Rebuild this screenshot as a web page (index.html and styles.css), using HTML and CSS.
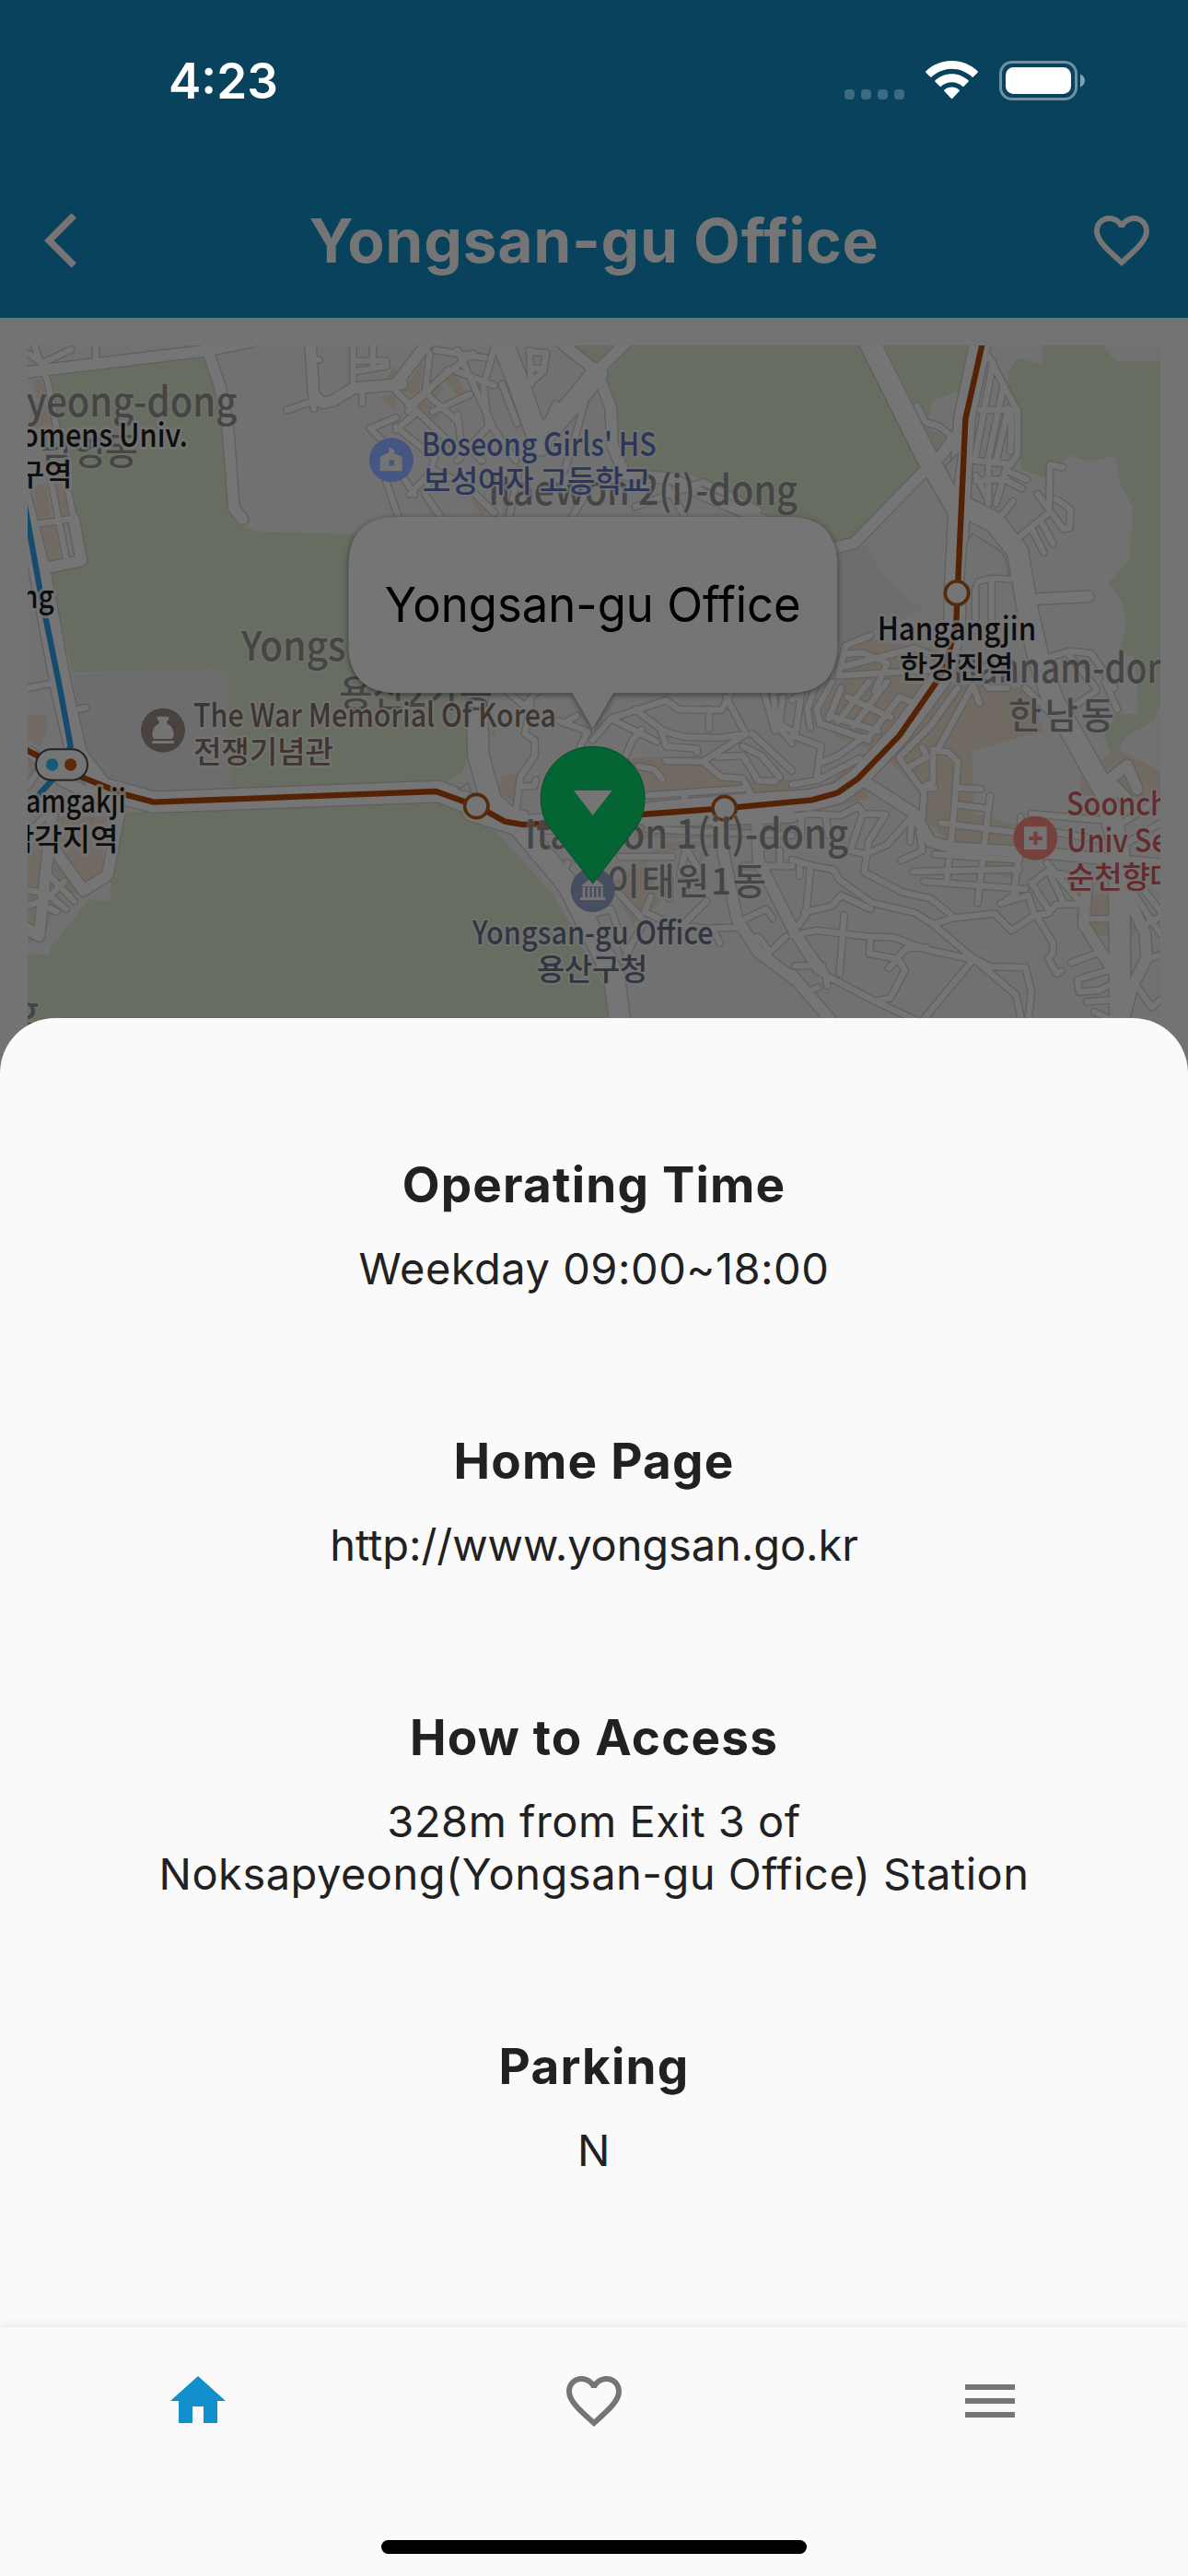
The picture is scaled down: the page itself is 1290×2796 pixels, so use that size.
FILE: index.html
```html
<!DOCTYPE html>
<html lang="en">
<head>
<meta charset="utf-8">
<title>Yongsan-gu Office</title>
<meta name="viewport" content="width=device-width">
<link rel="stylesheet" href="styles.css">
</head>
<body>
<div class="screen">
  <header class="top">
    <div class="status">
      <span class="clock">4:23</span>
      <span class="status-icons">
        <span class="signal"><i></i><i></i><i></i><i></i></span>
        <svg class="wifi" viewBox="0 0 57 42"><path d="M28.500 0C39.500 0 49.500 4.300 56.600 11.300Q57.300 12 56.600 12.700L51.800 17.600Q51.200 18.200 50.500 17.600C44.700 12.200 37 8.800 28.500 8.800S12.300 12.200 6.500 17.600Q5.800 18.200 5.200 17.600L.4 12.700Q-.3 12 .4 11.300C7.500 4.300 17.500 0 28.500 0z"/><path d="M28.500 14.200c7 0 13.300 2.700 18 7.100q.7.700 0 1.400l-5 5q-.7.700-1.400 0c-3.100-2.800-7.200-4.500-11.600-4.500s-8.500 1.700-11.600 4.500q-.7.700-1.400 0l-5-5q-.7-.7 0-1.400c4.700-4.400 11-7.100 18-7.100z"/><path d="M28.500 28.500c3.100 0 5.900 1.100 8.100 3q.7.700 0 1.400l-7.300 7.900q-.8.800-1.600 0l-7.300-7.900q-.7-.7 0-1.400c2.200-1.900 5-3 8.100-3z"/></svg>
        <svg class="battery" viewBox="0 0 94 43"><rect x="1.500" y="1.500" width="82" height="40" rx="12.500" fill="none" stroke="#fff" stroke-opacity=".42" stroke-width="3"/><rect x="7" y="7" width="71" height="29" rx="8.500"/><path d="M88 14.500c3 1.200 5 3.900 5 7s-2 5.800-5 7z" opacity=".5"/></svg>
      </span>
    </div>
    <div class="bar">
      <svg class="back" viewBox="0 0 12 24"><path d="M11.670 3.870L9.900 2.100 0 12l9.900 9.900 1.770-1.770L3.540 12z"/></svg>
      <h1>Yongsan-gu Office</h1>
      <svg class="icon" viewBox="0 0 24 24"><path id="heart" d="M16.500 3c-1.740 0-3.410.81-4.500 2.090C10.910 3.810 9.240 3 7.500 3 4.420 3 2 5.420 2 8.500c0 3.780 3.400 6.860 8.550 11.540L12 21.350l1.450-1.320C18.600 15.360 22 12.280 22 8.500 22 5.420 19.580 3 16.500 3zm-4.400 15.550l-.1.100-.1-.1C7.140 14.240 4 11.390 4 8.500 4 6.500 5.500 5 7.500 5c1.540 0 3.040.99 3.570 2.360h1.870C13.460 5.990 14.960 5 16.500 5c2 0 3.500 1.500 3.500 3.500 0 2.890-3.140 5.740-7.900 10.050z"/></svg>
    </div>
  </header>

  <main>
    <svg class="map" viewBox="90 75 3690 2370">
      <defs>
        <g id="streets">
          <path d="M90 100L140 132L232 88M110 70L135 140L155 190L210 480L265 775M165 510L215 765M130 655L240 638M312 75V115M935 286L1022 255M1022 240V282M1180 235V262M1028 121H1040M1150 80V195M1150 125H1258M1155 160L1260 142M1215 75V150M1290 310L1205 345L1260 400M1255 510L1300 640"/>
          <path transform="translate(1290)" d="M40 270L250 100M0 225L180 395M110 100L95 230L205 325M60 300L0 350M40 290L170 155M130 90L290 115M200 90L260 220L320 350L390 450M320 85L285 205L300 330M200 160L320 205M345 200L395 330M120 290L240 235M0 340L125 440L95 560L150 640M200 300L210 380L280 450M300 340L200 450M435 90L440 200M440 95L490 100L480 160L445 190M445 150H480M520 265L490 330M620 240L590 350L550 480M45 560L120 480L230 530L320 620M0 470L60 560M400 480L370 630M640 520L570 640M780 600L1000 520L1180 610M880 530L940 630"/>
          <path transform="translate(2580)" d="M408 272L435 325L480 338L525 375M640 110L735 290V430L695 480L665 590M655 130L595 450M690 200L640 440V590M705 280L665 450M715 300L712 420M612 285H735M600 450L715 462M600 515L700 510M600 500L640 580M705 485L765 512M695 512L748 540M720 582L688 622M882 472L840 463L838 610L885 673L905 668L907 608L860 575M838 618L745 695M800 558L838 610M815 655L850 720M785 680L820 748M597 1000V845L650 832L710 835M650 832V1000M840 1090L905 1070L975 1078L1050 1190M900 1080L990 1190M150 1150L175 1052L255 1020M170 1080L230 1075L310 1110M170 1120L400 1060L470 1090M310 1110L270 1200M160 1150L480 1130"/>
          <path transform="translate(0 1110)" d="M85 82L165 66M255 150L280 144M90 400L125 350M80 560L180 470M85 738L150 748L215 800M160 690L242 775M175 745L210 710M145 790L185 808M150 770L85 790"/>
          <path transform="translate(1290 1110)" d="M360 90L420 140L450 100L480 80M440 130L420 230L452 250V300L405 370L390 490M415 400H450L455 380M530 187L625 222L600 270M555 190L590 170M640 250L700 180L880 120L920 150L1060 152L1090 100M700 180L850 255M780 150L870 220L940 240L1060 242L1140 230M800 215L770 250L745 310M865 225L880 270L980 278V290M880 318L1000 320L1140 230L1075 110M1000 320L1060 370L1130 375L1165 445M1050 305L1130 300L1180 382L1235 384M1130 270L1190 300L1250 370M1160 230L1290 350M1230 100L1240 200L1290 260M1020 150V212M790 335L840 345L868 378M820 430L1130 408M940 420V480M1200 100L1235 220M1260 110L1250 200L1290 220M360 480L420 490M730 630H900M820 540L1290 560M945 600L925 690M945 600L990 680M1250 610V655M1130 660H1290M1110 845L1205 800L1228 830M1110 860L1030 862L1055 910M930 855L1012 775M830 760L810 810L900 850L1025 865M700 720L810 840L770 910L740 970M610 825L700 800L745 930M540 680L560 650M890 700V765M1150 900L1180 890L1218 940L1270 890"/>
          <path transform="translate(2580 1110)" d="M60 210L50 150L75 80M90 195L250 250M120 180L160 80M90 195L80 150L130 60M150 190L250 60M200 205L310 60M180 110L320 175M120 170L280 220M0 235L95 270L80 370M0 120L30 100L10 240M90 325L150 300L235 240M0 395L85 380L220 310M250 240L350 110L400 130M350 305L450 205L540 80M350 310L430 420L425 500M385 335L440 305L425 275M460 280V385L430 400M465 405H430M475 280L590 70L610 130M475 285L510 290L540 320L530 460L505 700M540 405L615 409M540 460L630 472M645 432L605 780M485 520L740 552M465 622L740 640M395 678L740 670M430 710L760 735M738 630L722 750M0 500L60 490L160 495L215 465L235 490L305 492L250 580L235 680L360 745L450 765L520 820M230 490L190 610L240 622L310 590L390 500L385 580M355 642L425 610L415 550M30 500V560M110 500L120 560M0 640L70 660L135 672L155 705L260 780L400 812L460 850L590 960L730 1080L755 1200M25 650V692M60 670L45 820L0 880M40 810L130 790L160 755L255 800M0 885L80 870L250 890L330 892L440 932L590 965L420 1170M460 850L520 830L660 815L715 870L790 820L770 755L680 782M170 820L155 1010M255 895L252 945L340 962L372 928L440 925M345 965L315 992M345 960L368 1000L320 1090L270 1100M10 890L80 1000L270 1100L400 1160M20 880L110 1010L115 1050M10 985H100M60 1065L85 1055M590 960L650 988L760 990L780 1070L765 1200M795 820L850 910V945L835 960L862 1010L878 1002M700 770L730 750M790 820L835 815L860 785L930 785M780 715L835 675L885 780M780 715L835 800M830 650L950 790M780 490L1000 510M745 500V550M860 550L1000 575M875 685L960 700M970 832H1060M910 975L990 945M930 1030L1030 1000M930 1035L935 1070L1000 1065L1050 1040M960 1102L1050 1095M985 1135L1060 1170M1150 965L1200 950M1150 850L1200 825M1130 1060L1172 1120L1200 1095M1080 700L1200 880M1110 690L1210 820M1020 480L1060 530L1200 440M1100 580L1200 520M760 80L860 180L990 90M1020 60L1060 150M700 80L640 80L610 40"/>
        </g>
        <g id="avenues">
          <path d="M60 165L670 92L820 62M675 85L717 210L742 340L762 605L790 640M1010 60L1022 235L1050 262L1085 255L1150 215L1310 200M240 640L265 775L150 800"/>
          <path transform="translate(1290)" d="M0 200L100 70M530 60L655 160L755 60M655 160L700 280L705 400L745 495L900 508L1000 560L1200 645"/>
          <path transform="translate(2580)" d="M440 475L203 718L140 733M550 350L480 440M805 900L965 892"/>
          <path transform="translate(0 1110)" d="M170 490L145 720L127 888L80 858M180 610L272 740L350 690L392 470M100 290L200 380L390 470"/>
          <path transform="translate(1290 1110)" d="M1045 510L1110 830L1180 940L1300 1030M1175 480L1180 640L1290 860M820 515L1290 500"/>
          <path transform="translate(2580 1110)" d="M230 380L400 490L450 580L520 600L850 620L1200 655M960 720L950 850L1070 1040M1080 730L1150 880L1155 960L1110 1050L1075 1180M0 1015L150 1190M1025 385L1092 332L1125 410M1030 380L1090 440"/>
        </g>
        <g id="trunks">
          <path d="M45 480L130 810L200 1190L225 1300L250 1410L330 1515L500 1562L1430 1527L1550 1575"/>
          <path transform="translate(1290)" d="M345 60L400 200L470 400M655 165L600 235L480 370"/>
          <path transform="translate(2580)" d="M615 60L562 310L545 600L532 850L530 1000L490 1150L350 1340L215 1485L150 1532L60 1555L-200 1572L-500 1600L-880 1640L-1040 1590M245 50L440 440L540 610M560 600L660 650L735 745L770 950L805 1100L850 1230L925 1360L1020 1530L1065 1720L1070 2400"/>
          <path transform="translate(1290 1110)" d="M263 60L268 300L310 450L400 530L560 720L650 900L710 1020L735 1200"/>
        </g>
      </defs>

      <rect class="land" x="90" y="75" width="3690" height="2370"/>

      <g class="park">
        <path d="M160 178L655 95L695 215L722 340L745 615L770 655L840 680L1160 690L1500 700L1525 1410L1505 1465L1445 1505L755 1528L740 1130L235 1140L165 815L265 760L230 480Z"/>
        <path d="M405 1595L1430 1550L1575 1615L1800 1860L1990 2200L2000 2445H90V2060L160 2058L165 2035L290 1878L360 1885V1820Z"/>
        <path d="M1870 75H1995L1945 140ZM2055 75H2795L2995 472L2775 698L2715 712L2535 640L2370 550L2240 490L2055 485L2020 400L2010 280L1965 185Z"/>
        <path d="M2880 75H3167L3145 215L3035 255L3025 310L3000 310ZM3015 340L3080 375L3050 415Z"/>
        <path d="M3395 75H3595L3635 128H3780V1240L3760 1295L3665 1350L3630 1425L3598 1350L3635 1275L3710 1275L3695 1085L3645 1080L3670 980L3655 910L3610 850L3680 770L3690 600L3650 530L3635 435L3545 452L3485 432L3405 505L3325 478V290L3285 250V158L3318 115L3395 138Z"/>
      </g>
      <path class="institution" d="M235 1145L740 1132L755 1525L325 1538L265 1350ZM2720 750L2820 725L2855 790L2925 870L3010 935L2920 970L2730 1060Z"/>
      <g class="shops">
        <path d="M105 187L135 183L150 245L118 250ZM108 530L150 524L168 640L128 646ZM170 522H205L222 625L190 632ZM132 668L180 658L197 768L155 778ZM100 260L145 255L165 330L115 340Z"/>
        <path d="M1380 120L1365 235L1315 225ZM1390 180L1445 215L1405 260L1370 235ZM1440 175L1475 150L1515 230L1500 255ZM1350 285L1380 250L1430 295L1425 315H1390ZM1290 140V200L1250 190ZM1240 240L1290 230V290ZM1530 570L1590 610L1570 630ZM1640 590L1660 595L1640 640Z"/>
        <path d="M2760 1060L2830 1030L3010 1060L3060 1050V1180L3170 1180L3340 1190L3400 1330L3165 1395L3175 1600L3320 1640L3370 1670L3300 1810L3250 1800L3110 1700L3010 1620L2990 1520L2900 1430L2820 1495L2830 1550L2580 1610V1530L2700 1500L2840 1390L2720 1350V1290L2650 1300L2740 1160Z"/>
        <path d="M1635 1475L1700 1468L1690 1570L1620 1530ZM2050 1420L2290 1410L2340 1490L2580 1490V1640L2480 1680H2060L2110 1610V1540ZM2170 1690H2290L2270 1780L2320 1700L2100 1740L2150 1890L2060 1960L1990 1830ZM1590 1330H1620L1610 1350ZM1800 1745H1900L1850 1775ZM1690 1225L1730 1230L1710 1250Z"/>
        <path d="M90 1280H150L155 1320L130 1380L90 1360ZM180 1610H345L330 1800L270 1860H200L150 1980L90 2025V1700L160 1680ZM90 1420L130 1460L100 1520Z"/>
        <path d="M3640 1390L3780 1460V1560L3620 1540H3520V1470ZM3550 1860L3700 1840L3740 1930L3680 2010L3560 1990L3500 1930ZM3420 1770L3500 1820V1890Z"/>
      </g>

      <use class="edge street" href="#streets"/>
      <use class="edge avenue" href="#avenues"/>
      <use class="edge trunk" href="#trunks"/>
      <use class="face street" href="#streets"/>
      <use class="face avenue" href="#avenues"/>
      <use class="face trunk" href="#trunks"/>

      <path class="block" d="M3168 687L3260 745L3275 770L3287 825L3230 822L3180 835L3165 870L3140 850L3150 715ZM3078 468L3122 425L3108 528ZM1493 1520L1525 1500L1535 1530Z"/>

      <path class="line line6" d="M3202 60L3145 315L3118 900L3115 980L3080 1120L3048 1175L2930 1345L2795 1485L2728 1532L2645 1555L2360 1582L2090 1602L1890 1628L1705 1635L1645 1625L1555 1575L1420 1527L1290 1532L500 1562L410 1538L265 1480L60 1380"/>
      <path class="line line4" d="M80 590L130 870L195 1190L230 1380L170 1490L120 1545"/>
      <g class="stop"><circle cx="3117" cy="881" r="38"/><circle cx="1552" cy="1575" r="38"/><circle cx="2360" cy="1582" r="38"/></g>
      <rect class="transfer" x="117" y="1390" width="168" height="100" rx="50"/>
      <circle cx="170" cy="1440" r="20" fill="#165878"/><circle cx="230" cy="1440" r="20" fill="#602b0b"/>

      <g class="label area" font-size="132">
        <text x="86" y="307" textLength="686" lengthAdjust="spacingAndGlyphs">yeong-dong</text>
        <text x="130" y="462" font-size="118" textLength="320">남영동</text>
        <text x="786" y="1100" textLength="340" lengthAdjust="spacingAndGlyphs">Yongs</text>
        <text x="1105" y="1252" font-size="118" textLength="500">용산2가동</text>
        <text x="1590" y="595" textLength="1008" lengthAdjust="spacingAndGlyphs">Itaewon 2(i)-dong</text>
        <text x="1710" y="1713" textLength="1053" lengthAdjust="spacingAndGlyphs">Itaewon 1(il)-dong</text>
        <text x="1976" y="1862" font-size="118" textLength="520">이태원1동</text>
        <text x="3105" y="1172" textLength="765" lengthAdjust="spacingAndGlyphs">Hannam-dong</text>
        <text x="3285" y="1322" font-size="118" textLength="345">한남동</text>
        <text x="50" y="2290">g</text>
      </g>
      <g class="label" font-size="106">
        <g class="school">
          <circle cx="1275" cy="448" r="72"/>
          <text x="1373" y="436" textLength="765" lengthAdjust="spacingAndGlyphs">Boseong Girls' HS</text>
          <text x="1376" y="552" font-size="100" textLength="744">보성여자 고등학교</text>
        </g>
        <g class="museum">
          <circle cx="531" cy="1328" r="72"/>
          <text x="630" y="1316" textLength="1182" lengthAdjust="spacingAndGlyphs">The War Memorial Of Korea</text>
          <text x="630" y="1433" font-size="100" textLength="456">전쟁기념관</text>
        </g>
        <g class="office">
          <circle cx="1931" cy="1848" r="72"/>
          <text x="1538" y="2026" textLength="786" lengthAdjust="spacingAndGlyphs">Yongsan-gu Office</text>
          <text x="1748" y="2143" font-size="100" textLength="362">용산구청</text>
        </g>
        <g class="hospital">
          <circle cx="3373" cy="1679" r="72"/>
          <text x="3474" y="1606" textLength="712" lengthAdjust="spacingAndGlyphs">Soonchunhyang</text>
          <text x="3474" y="1725" textLength="470" lengthAdjust="spacingAndGlyphs">Univ Seoul</text>
          <text x="3474" y="1842" font-size="100" textLength="453">순천향대학</text>
        </g>
        <g class="station">
          <text x="612" y="406" text-anchor="end" textLength="625" lengthAdjust="spacingAndGlyphs">Womens Univ.</text>
          <text x="236" y="530" font-size="100" text-anchor="end" textLength="273">입구역</text>
          <text x="176" y="930" text-anchor="end" textLength="400" lengthAdjust="spacingAndGlyphs">Samyong</text>
          <text x="410" y="1596" text-anchor="end" textLength="378" lengthAdjust="spacingAndGlyphs">Samgakji</text>
          <text x="386" y="1718" font-size="100" text-anchor="end" textLength="366">삼각지역</text>
          <text x="2858" y="1036" textLength="518" lengthAdjust="spacingAndGlyphs">Hangangjin</text>
          <text x="2930" y="1159" font-size="100" textLength="372">한강진역</text>
        </g>
      </g>
      <g class="glyph">
        <path d="M1238 437L1267 423V405L1286 417L1284 426L1310 437V484H1238Z"/><path fill="#455683" d="M1267 448H1284V466H1267Z"/>
        <path d="M512 1283H550V1292L544 1298V1306Q566 1318 566 1342Q566 1352 560 1356H502Q496 1352 496 1342Q496 1318 518 1306V1298L512 1292ZM496 1362H567V1371H496Z"/>
        <path d="M1896 1832L1931 1806L1966 1832V1837H1896ZM1898 1839H1906V1872H1898ZM1914 1839H1921V1872H1914ZM1928 1839H1935V1872H1928ZM1942 1839H1949V1872H1942ZM1957 1839H1964V1872H1957ZM1890 1872H1972V1881H1890Z"/>
        <path fill-rule="evenodd" d="M3336 1642H3410V1716H3336ZM3367 1658V1673H3352V1686H3367V1701H3380V1686H3395V1673H3380V1658Z"/>
      </g>

      <path class="bubble" d="M1295 633H2570Q2728 633 2728 795V1045Q2728 1207 2570 1207H1998L1931 1322L1864 1207H1295Q1135 1207 1135 1045V795Q1135 633 1295 633Z"/>
      <text class="bubble-text" x="1253" y="975" textLength="1356" lengthAdjust="spacingAndGlyphs">Yongsan-gu Office</text>

      <path class="pin" d="M1931 1826L1786 1638C1772 1616 1762 1588 1762 1550A169 169 0 0 1 2100 1550C2100 1588 2090 1616 2076 1638Z"/>
      <path fill="#757575" d="M1869 1524H1994L1931 1605Z"/>
    </svg>
  </main>

  <section class="sheet">
    <article><h2>Operating Time</h2><p>Weekday 09:00~18:00</p></article>
    <article><h2>Home Page</h2><p class="url">http://www.yongsan.go.kr</p></article>
    <article><h2>How to Access</h2><p>328m from Exit 3 of<br>Noksapyeong(Yongsan-gu Office) Station</p></article>
    <article><h2>Parking</h2><p>N</p></article>
  </section>

  <nav>
    <div class="tabs">
      <a class="active"><svg class="icon" viewBox="0 0 24 24"><path d="M10 20v-6h4v6h5v-8h3L12 3 2 12h3v8z"/></svg></a>
      <a><svg class="icon" viewBox="0 0 24 24"><use href="#heart"/></svg></a>
      <a><svg class="icon" viewBox="0 0 24 24"><path d="M3 18h18v-2H3v2zm0-5h18v-2H3v2zm0-7v2h18V6H3z"/></svg></a>
    </div>
    <div class="home-indicator"></div>
  </nav>
</div>
</body>
</html>
```
FILE: styles.css
```css
* { box-sizing: border-box; }

body {
  margin: 0;
  font-family: Inter, "Liberation Sans", sans-serif;
  background: #737373;
}

.screen {
  display: flex;
  flex-direction: column;
  width: 1290px;
  height: 2796px;
  overflow: hidden;
}

svg { display: block; }

.top {
  flex: none;
  height: 345px;
  background: #08425d;
}

.status {
  display: flex;
  justify-content: space-between;
  align-items: center;
  height: 177px;
  padding: 0 111px 3px 183px;
  color: #fff;
}

.clock {
  padding-top: 2px;
  font-size: 53px;
  font-weight: 600;
}

.status-icons {
  display: flex;
  align-items: center;
  fill: #fff;
}

.signal {
  display: flex;
  gap: 7px;
  margin: 31px 23px 0 0;
}

.signal i {
  width: 11px;
  height: 11px;
  border-radius: 4px;
  background: #3e6a80;
}

.wifi { width: 57px; height: 42px; margin-right: 23px; }
.battery { width: 94px; height: 43px; }

.bar {
  display: grid;
  grid-template-columns: 72px 1fr 72px;
  align-items: center;
  height: 168px;
  padding: 0 36px;
  fill: #757575;
  color: #757575;
}

.back { width: 36px; height: 72px; margin-left: 12px; }
.icon { width: 72px; height: 72px; }

h1 {
  margin: 0;
  font-size: 66px;
  font-weight: 700;
  line-height: 1;
  letter-spacing: .7px;
  text-align: center;
}

main {
  flex: none;
  padding: 30px 30px 0;
}

.map {
  width: 1230px;
  height: 790px;
  overflow: hidden;
}

.land, .block { fill: #717171; }
.block { stroke: #616161; stroke-width: 4; }
.park { fill: #676d60; }
.shops { fill: #706a63; }
.institution { fill: #6d6d6d; }

.edge, .face {
  fill: none;
  stroke-linecap: round;
  stroke-linejoin: round;
}
.edge { stroke: #606060; }
.face { stroke: #757575; }
.edge.street { stroke-width: 27px; }
.face.street { stroke-width: 19px; }
.edge.avenue { stroke-width: 43px; }
.face.avenue { stroke-width: 35px; }
.edge.trunk { stroke-width: 75px; }
.face.trunk { stroke-width: 67px; }

.line { fill: none; stroke-width: 19px; }
.line6 { stroke: #542306; }
.line4 { stroke: #154c6d; }
.stop { fill: #757575; stroke: #542b0b; stroke-width: 11px; }
.transfer { fill: #757575; stroke: #242424; stroke-width: 6px; }

.label text {
  font-family: "Noto Sans CJK KR", sans-serif;
  font-weight: 500;
  stroke: #747474;
  stroke-opacity: .8;
  stroke-width: 14px;
  stroke-linejoin: round;
  paint-order: stroke;
}
.label.area text {
  fill: #454545;
  stroke-opacity: .35;
}
.school { fill: #2b3658; }
.school circle { fill: #455683; }
.museum { fill: #3e352f; }
.museum circle { fill: #49423e; }
.office { fill: #31353f; }
.office circle { fill: #474e60; }
.hospital { fill: #642b2d; }
.hospital circle { fill: #75413c; }
.station { fill: #0d0d0d; }
.label .station text { stroke-width: 20px; }
.glyph { fill: #747474; }

.bubble {
  fill: #757575;
  filter: drop-shadow(0 5px 9px rgba(0, 0, 0, .5));
}
.bubble-text {
  font-size: 158px;
  fill: #000;
}
.pin { fill: #046434; stroke: #06582f; stroke-width: 4px; }

.sheet {
  position: relative;
  flex: 1;
  display: flex;
  flex-direction: column;
  gap: 120px;
  margin-top: -60px;
  padding-top: 150px;
  border-radius: 60px 60px 0 0;
  background: #fafafa;
  color: #212121;
  text-align: center;
}

h2 {
  margin: 0;
  font-size: 53px;
  font-weight: 700;
  line-height: 63px;
  letter-spacing: 1.2px;
}

.sheet p {
  margin: 30px 0;
  font-size: 47px;
  line-height: 57px;
  letter-spacing: .5px;
}
.sheet .url { letter-spacing: -.1px; }

nav {
  position: relative;
  flex: none;
  display: flex;
  flex-direction: column;
  justify-content: space-between;
  align-items: center;
  height: 270px;
  padding: 44px 0 24px;
  background: #fafafa;
  box-shadow: 0 -2px 9px rgba(0, 0, 0, .07);
}

.tabs {
  display: grid;
  grid-template-columns: repeat(3, 1fr);
  justify-items: center;
  width: 100%;
  fill: #757575;
}
.active { fill: #1290cd; }

.home-indicator {
  width: 462px;
  height: 15px;
  border-radius: 8px;
  background: #000;
}
```
